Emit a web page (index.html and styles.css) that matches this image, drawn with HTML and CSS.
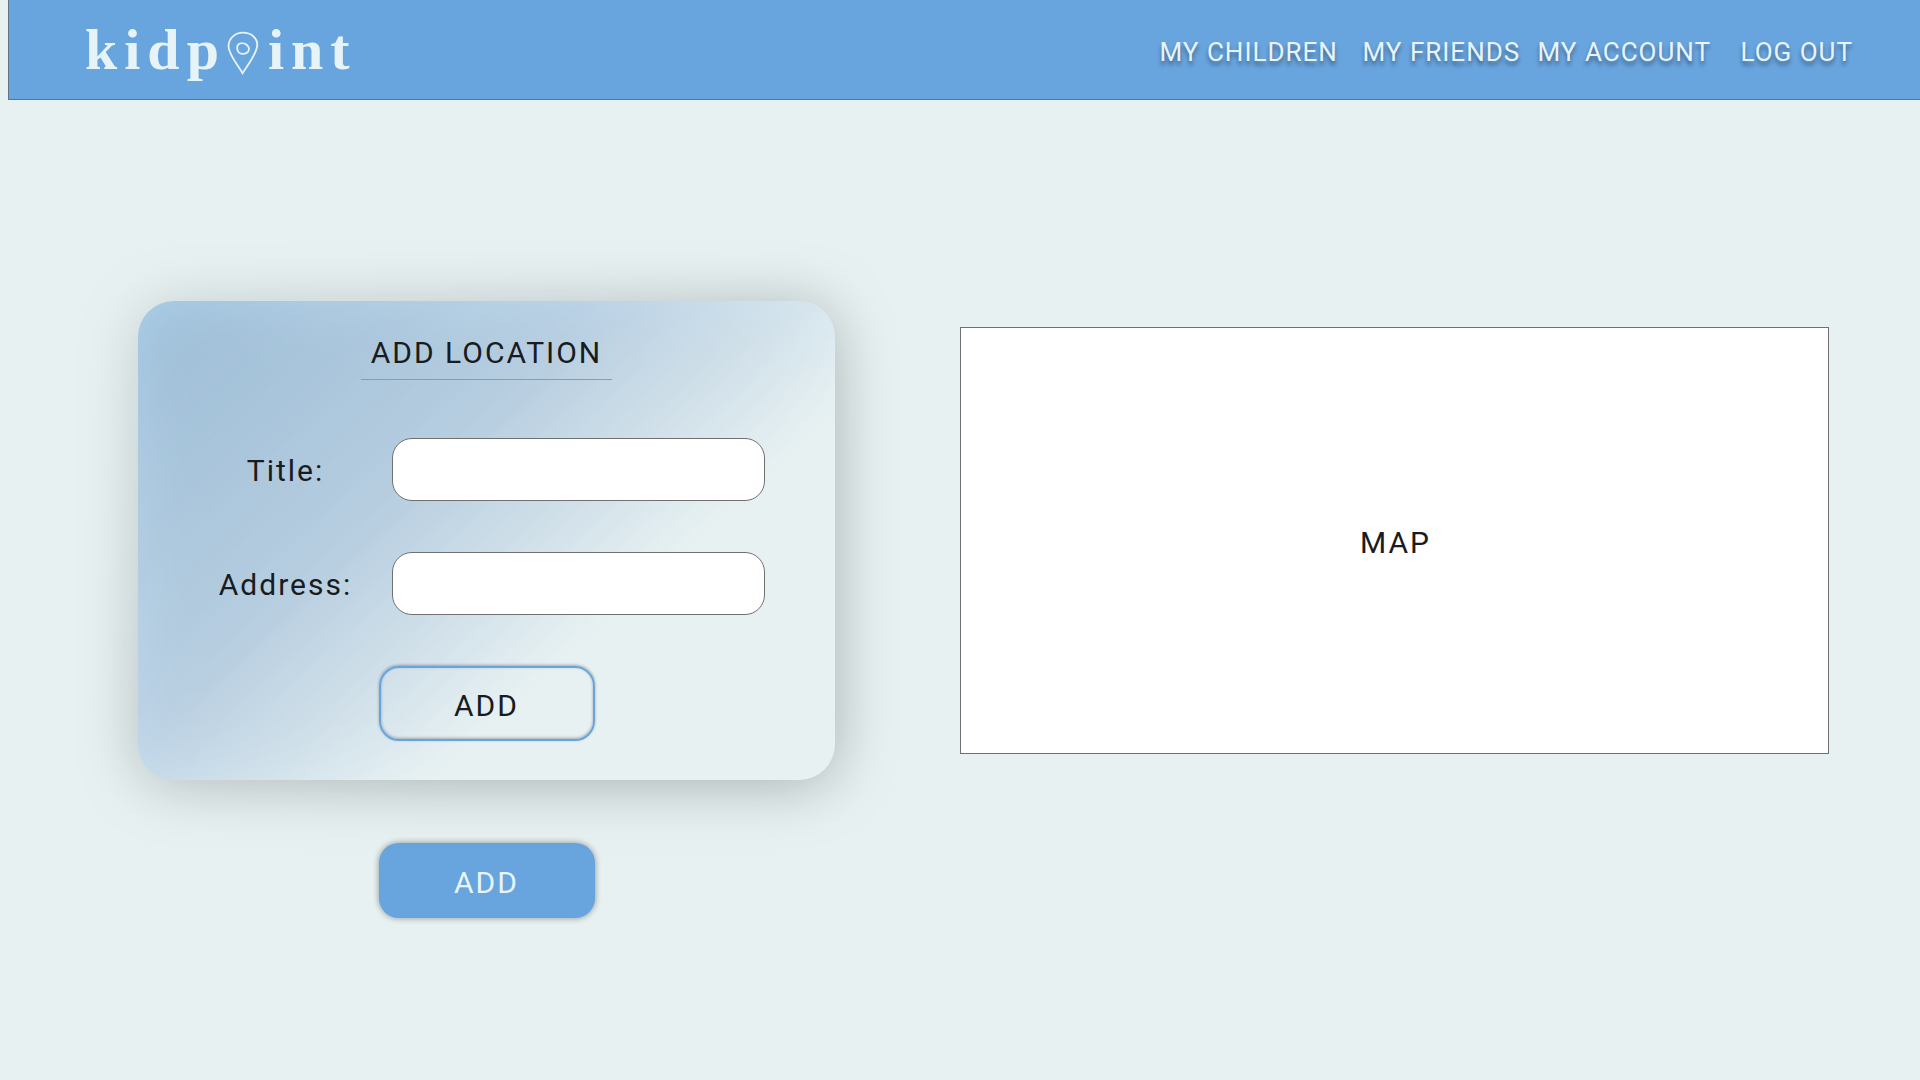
FILE: index.html
```html
<!DOCTYPE html>
<html lang="en">
<head>
  <meta charset="utf-8">
  <meta name="viewport" content="width=device-width, initial-scale=1">
  <title>kidpoint – Add location</title>
  <link rel="stylesheet" href="styles.css">
</head>
<body>
  <header class="header">
    <a class="logo" href="#" aria-label="kidpoint">
      <span>kidp</span>
      <svg class="logo-pin" viewBox="0 0 32 44" width="32" height="44" fill="none" stroke="currentColor" stroke-width="1.8" aria-hidden="true">
        <path d="M15.6 42.2 C11 34.500 1.500 23 1.500 15.200 C1.500 7 8.500 1.700 16 1.700 C24 1.700 30.500 7 30.300 14 C30.100 22.500 20.500 34.500 15.600 42.200 Z"/>
        <path d="M10.200 17.500 C9.800 14 12 12 15.500 12.200 C19 12.300 22.200 15.500 22 18.200 C21.700 21.500 18.500 23.200 15 22.800 C12 22.500 10.500 20.500 10.200 17.500 Z"/>
      </svg>
      <span>int</span>
    </a>
    <nav class="nav">
      <a href="#">MY CHILDREN</a>
      <a href="#">MY FRIENDS</a>
      <a href="#">MY ACCOUNT</a>
      <a href="#">LOG OUT</a>
    </nav>
  </header>

  <main class="content">
    <form class="location" id="location">
      <section class="card">
        <h1 class="card-title">ADD LOCATION</h1>
        <div class="fields">
          <label for="title">Title:</label>
          <input id="title" type="text">
          <label for="address">Address:</label>
          <input id="address" type="text">
        </div>
        <button class="button button-outline" type="submit">ADD</button>
      </section>
      <button class="button button-solid" type="submit">ADD</button>
    </form>
    <section class="map">MAP</section>
  </main>
</body>
</html>
```

FILE: styles.css
```css
* {
  box-sizing: border-box;
}

body {
  margin: 0;
  min-height: 100vh;
  background: #e7f1f2;
  color: #181b20;
  font-family: Roboto, "Liberation Sans", sans-serif;
  font-size: 30px;
  font-weight: 400;
  line-height: 36px;
  letter-spacing: 2px;
}

.header {
  display: flex;
  align-items: center;
  justify-content: space-between;
  height: 100px;
  margin-left: 8px;
  padding: 0 67px 0 76px;
  border: solid #607489;
  border-width: 0 0 1px 1px;
  background: #68a4de;
}

.logo {
  display: flex;
  align-items: center;
  color: #e7f4f7;
  font-family: "Liberation Serif", serif;
  font-size: 58px;
  font-weight: 700;
  line-height: 60px;
  letter-spacing: 7px;
  text-decoration: none;
}

.logo-pin {
  margin: 6px 9px 0 1px;
}

.nav {
  display: grid;
  grid-template-columns: 203px 175px 203px auto;
  padding-top: 4px;
}

.nav a {
  color: #e7f4fb;
  font-size: 26px;
  letter-spacing: 1px;
  white-space: nowrap;
  text-decoration: none;
  text-shadow: 0 4px 4px rgba(0, 0, 0, 0.4);
}

.content {
  display: grid;
  grid-template-columns: 697fr 869fr;
  gap: 125px;
  align-items: start;
  padding: 201px 91px 60px 138px;
}

.location {
  display: flex;
  flex-direction: column;
  align-items: center;
  gap: 63px;
}

.card {
  position: relative;
  z-index: 0;
  display: flex;
  flex-direction: column;
  align-items: center;
  width: 100%;
  padding: 34px 70px 39px 70px;
}

.card::before {
  content: "";
  position: absolute;
  inset: 0;
  z-index: -1;
  border-radius: 36px;
  background: linear-gradient(138deg, rgba(112, 170, 220, 0.5), rgba(182, 209, 233, 0.78) 38%, #e7f1f2 67%);
  filter: drop-shadow(0 4px 30px rgba(0, 0, 0, 0.27));
}

.card-title {
  margin: 0;
  padding: 0 10px 8px;
  border-bottom: 1px solid #68a4de;
  font-size: 30px;
  font-weight: 400;
}

.fields {
  display: grid;
  grid-template-columns: 184px 1fr;
  gap: 51px 15px;
  align-items: center;
  align-self: stretch;
  margin: 58px 0 51px -15px;
  text-align: center;
}

.fields label {
  padding: 3px 0 0 1px;
}

.fields input {
  width: 100%;
  height: 63px;
  padding: 0 20px;
  border: 1px solid #707070;
  border-radius: 20px;
  background: #fff;
  font: inherit;
}

.button {
  width: 216px;
  height: 75px;
  padding: 4px 0 0;
  border-radius: 20px;
  font: inherit;
  letter-spacing: inherit;
}

.button-outline {
  border: 2px solid #68a4de;
  background: transparent;
  color: inherit;
  box-shadow: 0 -1px 3px rgba(0, 0, 0, 0.3), inset 0 -1px 3px rgba(0, 0, 0, 0.3);
}

.button-solid {
  border: 0;
  background: #68a4de;
  color: #e7f4fb;
  box-shadow: 0 0 6px rgba(0, 0, 0, 0.4);
}

.map {
  display: grid;
  place-items: center;
  min-height: 427px;
  margin-top: 26px;
  padding: 4px 0 0 2px;
  border: 1px solid #707070;
  background: #fff;
}
```
